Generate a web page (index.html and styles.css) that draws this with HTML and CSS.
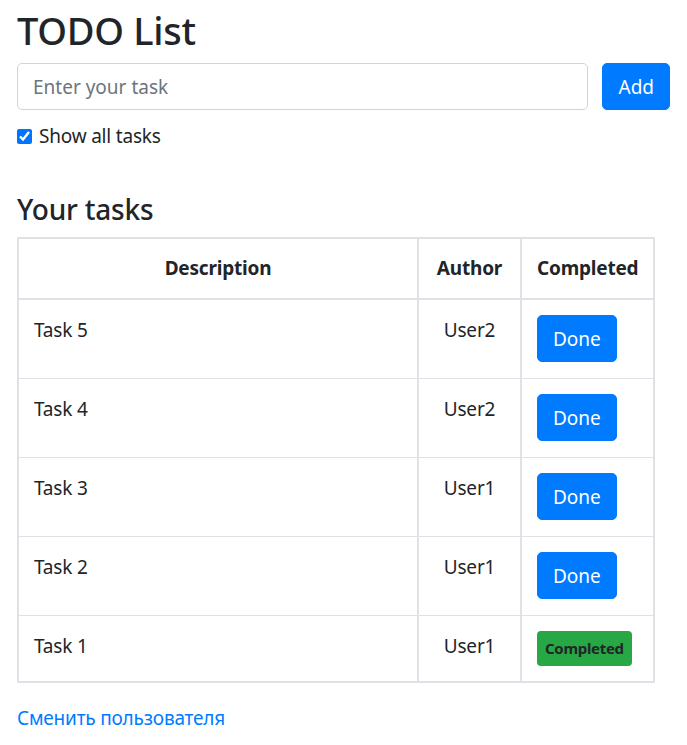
FILE: index.html
```html
<!DOCTYPE html>
<html lang="en">
<head>
<meta charset="utf-8">
<title>TODO List</title>
<link rel="stylesheet" href="styles.css">
</head>
<body>
<div class="container">
  <h1 class="title">TODO List</h1>
  <form class="add-row">
    <input class="task-input" type="text" placeholder="Enter your task">
    <button class="btn btn-primary" type="button">Add</button>
  </form>
  <label class="check"><input type="checkbox" checked> Show all tasks</label>
  <h2 class="subtitle">Your tasks</h2>
  <table class="tasks">
    <thead>
      <tr>
        <th class="col-desc">Description</th>
        <th class="col-author">Author</th>
        <th class="col-done">Completed</th>
      </tr>
    </thead>
    <tbody>
      <tr><td>Task 5</td><td class="center">User2</td><td><button class="btn btn-primary" type="button">Done</button></td></tr>
      <tr><td>Task 4</td><td class="center">User2</td><td><button class="btn btn-primary" type="button">Done</button></td></tr>
      <tr><td>Task 3</td><td class="center">User1</td><td><button class="btn btn-primary" type="button">Done</button></td></tr>
      <tr><td>Task 2</td><td class="center">User1</td><td><button class="btn btn-primary" type="button">Done</button></td></tr>
      <tr class="last"><td>Task 1</td><td class="center">User1</td><td><span class="badge">Completed</span></td></tr>
    </tbody>
  </table>
  <a class="switch" href="#">Сменить пользователя</a>
</div>
</body>
</html>
```

FILE: styles.css
```css
* { box-sizing: border-box; }

body {
  margin: 0;
  font-family: "Noto Sans", "Open Sans", sans-serif;
  font-size: 19px;
  letter-spacing: -0.2px;
  line-height: 30px;
  color: #212529;
  background: #fff;
}

.container {
  padding: 6px 17px 0 17px;
}

.title {
  margin: 0 0 9px;
  font-size: 38px;
  line-height: 48px;
  font-weight: 500;
  letter-spacing: -0.3px;
}

.add-row {
  display: flex;
  gap: 14px;
  margin: 0;
}

.task-input {
  flex: 1;
  height: 47px;
  padding: 0 15px;
  border: 1px solid #ced4da;
  border-radius: 5px;
  font: inherit;
  color: #495057;
}
.task-input::placeholder { color: #6c757d; }

.btn {
  font: inherit;
  height: 47px;
  padding: 0 15px;
  border: 1px solid transparent;
  border-radius: 5px;
  cursor: pointer;
}
.btn-primary {
  background: #007bff;
  border-color: #007bff;
  color: #fff;
}

.check {
  display: flex;
  align-items: center;
  gap: 7px;
  margin-top: 11px;
}
.check input {
  width: 15px;
  height: 15px;
  margin: 0;
  accent-color: #0075ff;
}

.subtitle {
  margin: 40px 0 10px;
  font-size: 28px;
  line-height: 36px;
  font-weight: 500;
}

.tasks {
  width: 638px;
  table-layout: fixed;
  border-collapse: collapse;
  border: 2px solid #dee2e6;
}
.tasks th,
.tasks td {
  border: 1px solid #dee2e6;
  padding: 15px 15px 16px;
  vertical-align: top;
  text-align: left;
}
.tasks th {
  text-align: center;
  font-weight: 700;
  padding: 14px 15px 15px;
  border-bottom-width: 2px;
}
.tasks .col-desc { width: 400px; border-right-width: 2px; }
.tasks .col-author { width: 103px; border-right-width: 2px; }
.tasks td:first-child { border-right-width: 2px; }
.tasks td:nth-child(2) { border-right-width: 2px; }
.tasks .center { text-align: center; }
.tasks .last td { padding-bottom: 15px; }

.badge {
  display: inline-block;
  background: #28a745;
  color: #212529;
  font-size: 15px;
  line-height: 23px;
  font-weight: 700;
  letter-spacing: -0.3px;
  padding: 6px 8px;
  border-radius: 4px;
}

.switch {
  display: inline-block;
  margin-top: 20px;
  color: #007bff;
  text-decoration: none;
}
```
